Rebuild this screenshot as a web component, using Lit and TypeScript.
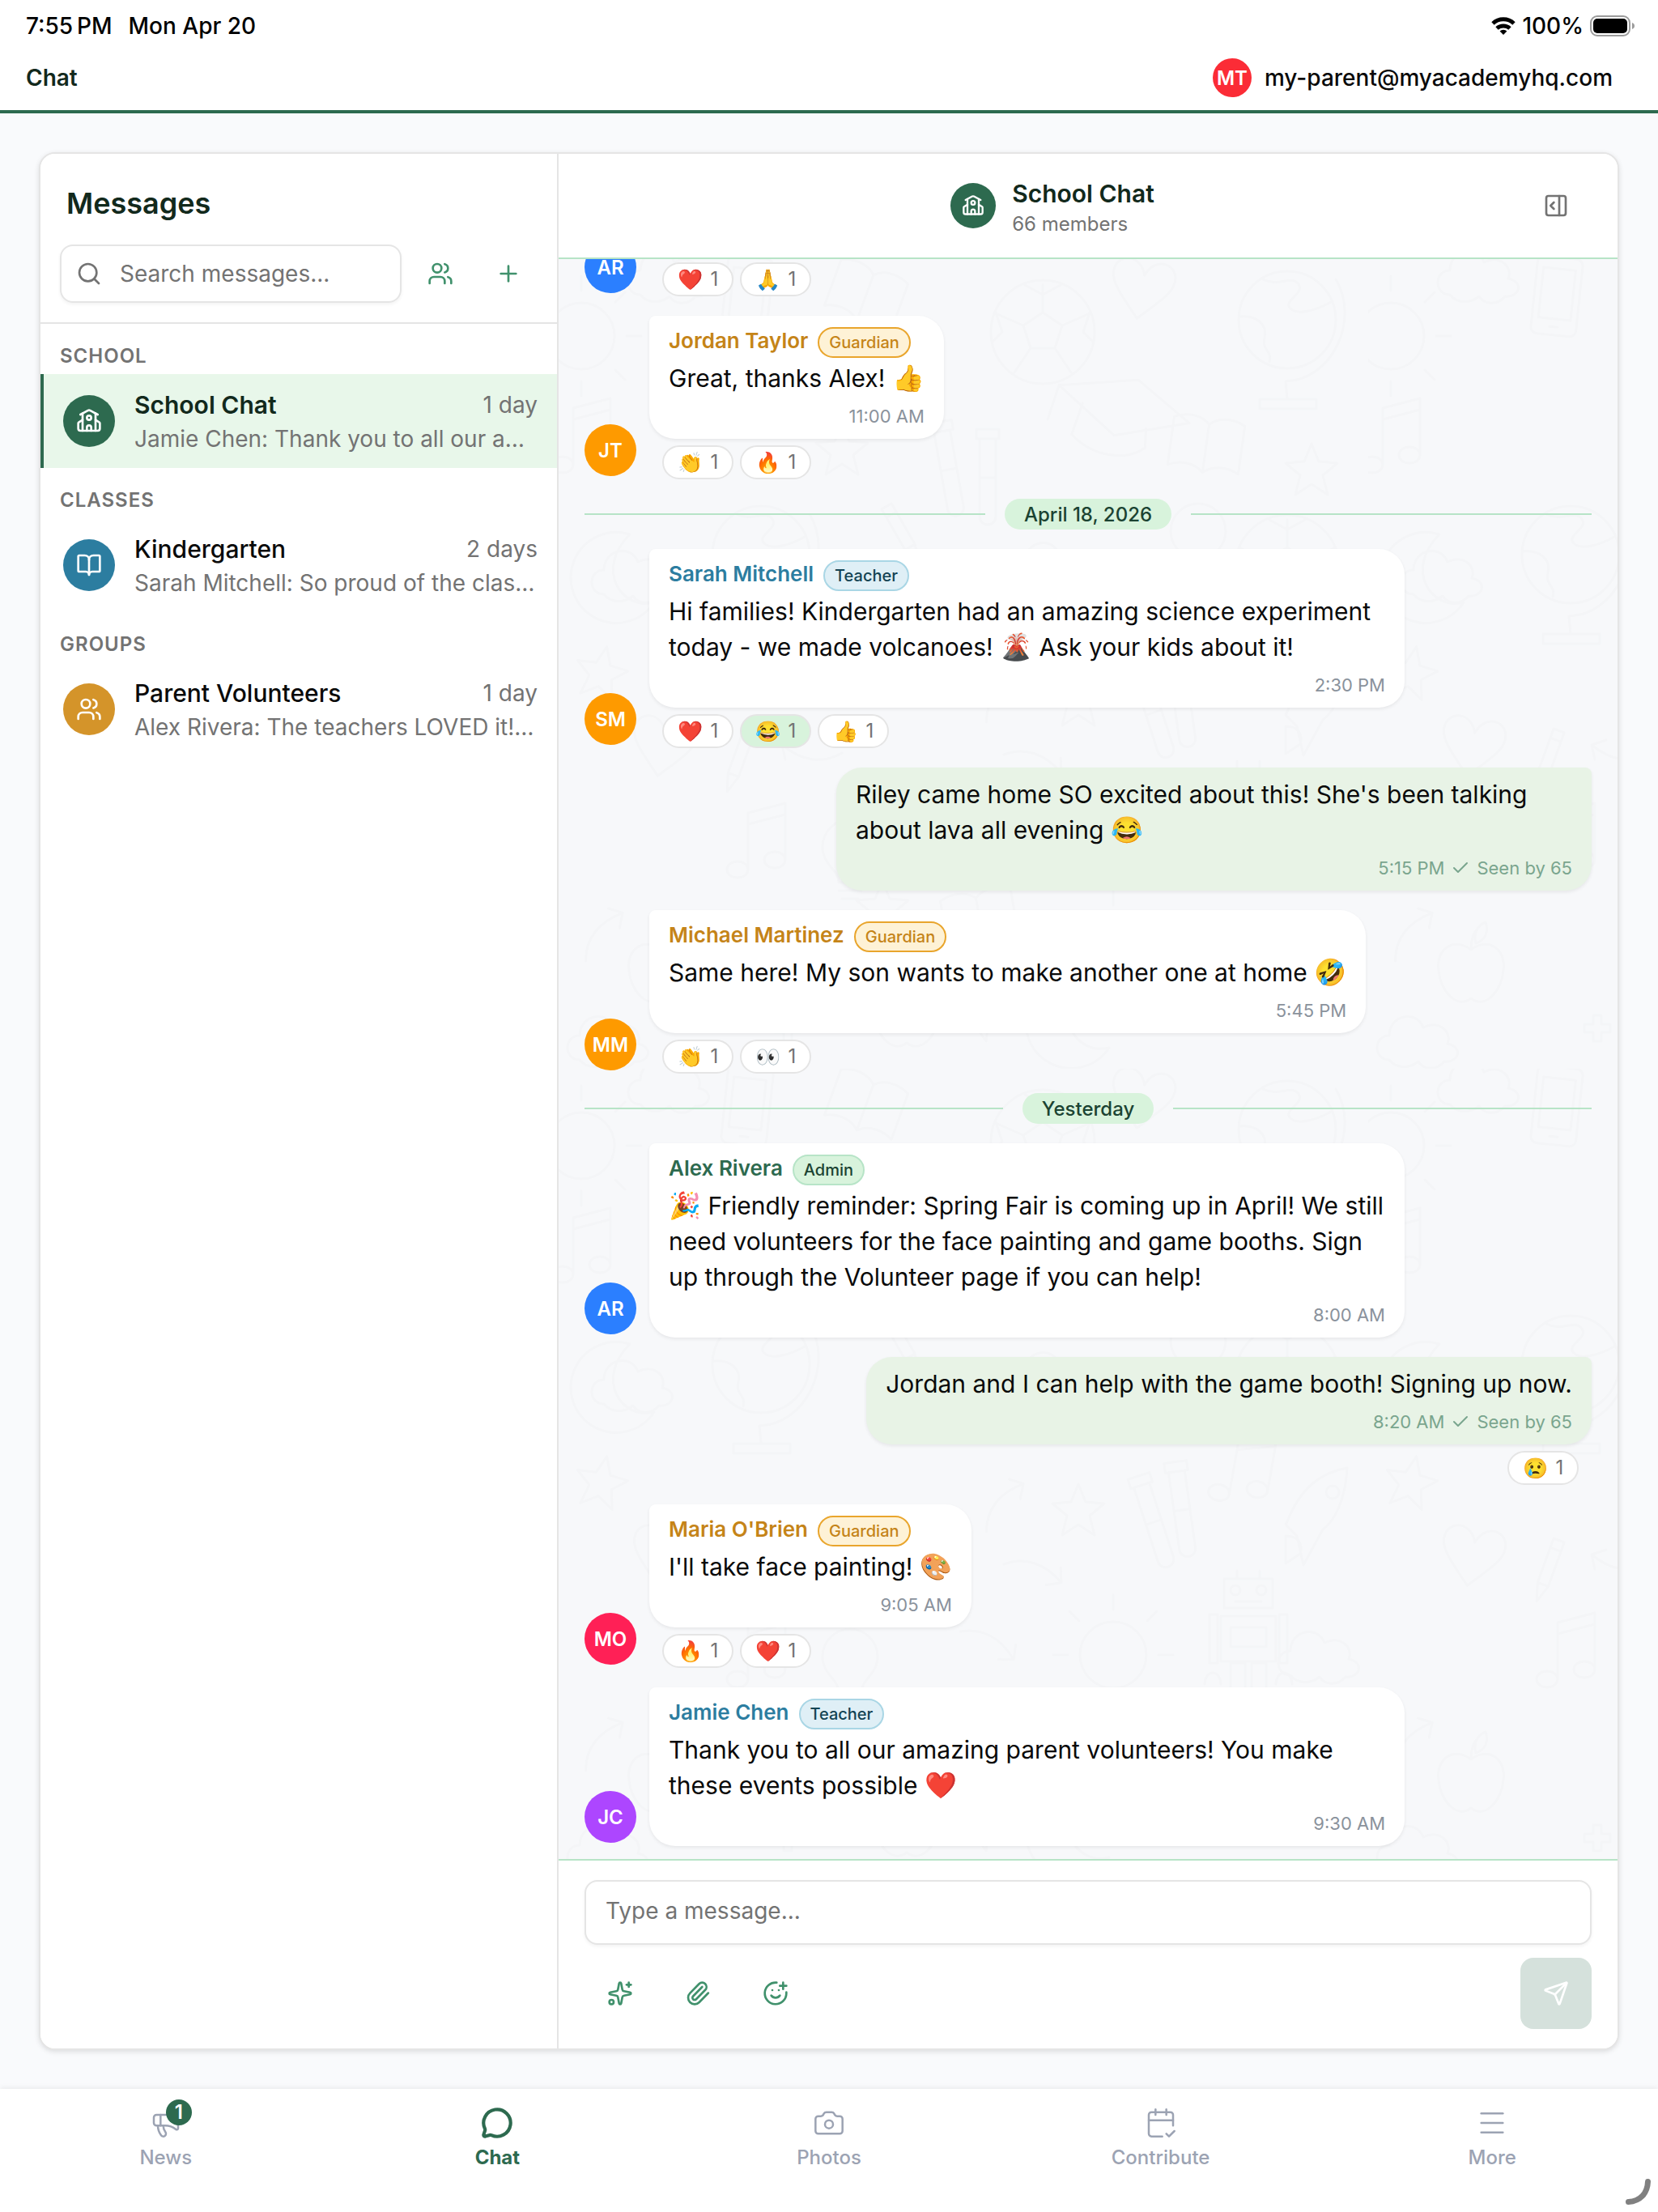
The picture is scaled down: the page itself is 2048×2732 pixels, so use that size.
import { LitElement, html, svg, css, nothing, type TemplateResult, type SVGTemplateResult } from "lit";
import { customElement, property } from "lit/decorators.js";
import { classMap } from "lit/directives/class-map.js";

const ICONS: Record<string, SVGTemplateResult> = {
  search: svg`<path d="m21 21-4.34-4.34"/><circle cx="11" cy="11" r="8"/>`,
  plus: svg`<path d="M5 12h14"/><path d="M12 5v14"/>`,
  users: svg`<path d="M16 21v-2a4 4 0 0 0-4-4H6a4 4 0 0 0-4 4v2"/><path d="M16 3.128a4 4 0 0 1 0 7.744"/><path d="M22 21v-2a4 4 0 0 0-3-3.87"/><circle cx="9" cy="7" r="4"/>`,
  school: svg`<path d="M14 21v-3a2 2 0 0 0-4 0v3"/><path d="M18 5v16"/><path d="m4 6 7.106-3.79a2 2 0 0 1 1.788 0L20 6"/><path d="m6 11-3.52 2.147a1 1 0 0 0-.48.854V19a2 2 0 0 0 2 2h16a2 2 0 0 0 2-2v-5a1 1 0 0 0-.48-.853L18 11"/><path d="M6 5v16"/><circle cx="12" cy="9" r="2"/>`,
  book: svg`<path d="M12 7v14"/><path d="M3 18a1 1 0 0 1-1-1V4a1 1 0 0 1 1-1h5a4 4 0 0 1 4 4 4 4 0 0 1 4-4h5a1 1 0 0 1 1 1v13a1 1 0 0 1-1 1h-6a3 3 0 0 0-3 3 3 3 0 0 0-3-3z"/>`,
  panel: svg`<rect x="3" y="3" width="18" height="18" rx="2"/><path d="M15 3v18"/><path d="m10 15-3-3 3-3"/>`,
  sparkles: svg`<path d="M11.017 2.814a1 1 0 0 1 1.966 0l1.051 5.558a2 2 0 0 0 1.594 1.594l5.558 1.051a1 1 0 0 1 0 1.966l-5.558 1.051a2 2 0 0 0-1.594 1.594l-1.051 5.558a1 1 0 0 1-1.966 0l-1.051-5.558a2 2 0 0 0-1.594-1.594l-5.558-1.051a1 1 0 0 1 0-1.966l5.558-1.051a2 2 0 0 0 1.594-1.594z"/><path d="M20 2v4"/><path d="M22 4h-4"/><circle cx="4" cy="20" r="2"/>`,
  clip: svg`<path d="m16 6-8.414 8.586a2 2 0 0 0 2.829 2.829l8.414-8.586a4 4 0 1 0-5.657-5.657l-8.379 8.551a6 6 0 1 0 8.485 8.485l8.379-8.551"/>`,
  smile: svg`<path d="M22 11v1a10 10 0 1 1-9-10"/><path d="M8 14s1.5 2 4 2 4-2 4-2"/><path d="M9 9h.01"/><path d="M15 9h.01"/><path d="M16 5h6"/><path d="M19 2v6"/>`,
  send: svg`<path d="M14.536 21.686a.5.5 0 0 0 .937-.024l6.5-19a.496.496 0 0 0-.635-.635l-19 6.5a.5.5 0 0 0-.024.937l7.93 3.18a2 2 0 0 1 1.112 1.11z"/><path d="m21.854 2.147-10.94 10.939"/>`,
  check: svg`<path d="M20 6 9 17l-5-5"/>`,
  megaphone: svg`<path d="M11 6a13 13 0 0 0 8.4-2.8A1 1 0 0 1 21 4v12a1 1 0 0 1-1.6.8A13 13 0 0 0 11 14H5a2 2 0 0 1-2-2V8a2 2 0 0 1 2-2z"/><path d="M6 14a12 12 0 0 0 2.4 7.2 2 2 0 0 0 3.2-2.4A8 8 0 0 1 10 14"/><path d="M8 6v8"/>`,
  chat: svg`<path d="M2.992 16.342a2 2 0 0 1 .094 1.167l-1.065 3.29a1 1 0 0 0 1.236 1.168l3.413-.998a2 2 0 0 1 1.099.092 10 10 0 1 0-4.777-4.719"/>`,
  camera: svg`<path d="M13.997 4a2 2 0 0 1 1.76 1.05l.486.9A2 2 0 0 0 18.003 7H20a2 2 0 0 1 2 2v9a2 2 0 0 1-2 2H4a2 2 0 0 1-2-2V9a2 2 0 0 1 2-2h1.997a2 2 0 0 0 1.759-1.048l.489-.904A2 2 0 0 1 10.004 4z"/><circle cx="12" cy="13" r="3"/>`,
  calendar: svg`<path d="M8 2v4"/><path d="M16 2v4"/><path d="M21 14V6a2 2 0 0 0-2-2H5a2 2 0 0 0-2 2v14a2 2 0 0 0 2 2h8"/><path d="M3 10h18"/><path d="m16 20 2 2 4-4"/>`,
  menu: svg`<path d="M4 5h16"/><path d="M4 12h16"/><path d="M4 19h16"/>`,
};

const icon = (name: string, size = 32, stroke = 2): TemplateResult => html`
  <svg width=${size} height=${size} viewBox="0 0 24 24" fill="none" stroke="currentColor"
    stroke-width=${stroke} stroke-linecap="round" stroke-linejoin="round" aria-hidden="true">${ICONS[name]}</svg>`;

const FONT = css`
  :host, button, input, textarea {
    font-family: Inter, "Liberation Sans", sans-serif;
  }
  *, *::before, *::after { box-sizing: border-box; }
  svg { display: block; flex: none; }
  button { border: 0; padding: 0; background: none; color: inherit; cursor: pointer; }
  h1, h2, h3, p, ul { margin: 0; padding: 0; font-weight: inherit; }
`;

/* ---------- status bar and page header ---------- */

@customElement("status-bar")
class StatusBar extends LitElement {
  static styles = [FONT, css`
    :host { display: flex; align-items: center; justify-content: space-between; height: 64px; padding: 0 28px 0 32px; background: #fff; color: #000; font-size: 28px; font-weight: 500; line-height: 36px; }
    .side { display: flex; align-items: center; gap: 20px; }
    .right { gap: 8px; }
  `];
  render() {
    return html`
      <div class="side"><span>7:55\u202fPM</span><span>Mon Apr 20</span></div>
      <div class="side right">
        <svg width="30" height="22" viewBox="0 0 30 22" fill="none" stroke="#000" stroke-width="5" aria-hidden="true">
          <path d="M2 8a19 19 0 0 1 26 0"/><path d="M7 14a12 12 0 0 1 16 0"/>
          <path d="M15 22l-4.400-4.600a6.500 6.500 0 0 1 8.800 0z" fill="#000" stroke="none"/>
        </svg>
        <span>100%</span>
        <svg width="56" height="26" viewBox="0 0 56 26" aria-hidden="true">
          <rect x="1" y="1" width="48" height="24" rx="8" fill="none" stroke="#9b9b9b" stroke-width="2"/>
          <rect x="4" y="4" width="42" height="18" rx="5" fill="#000"/>
          <path d="M52 9c2 .700 3 2.200 3 4s-1 3.300-3 4z" fill="#9b9b9b"/>
        </svg>
      </div>`;
  }
}

@customElement("page-header")
class PageHeader extends LitElement {
  static styles = [FONT, css`
    :host { display: flex; align-items: center; justify-content: space-between; height: 76px; padding: 0 56px 8px 32px; background: #fff; border-bottom: 4px solid #2d6a4f; font-size: 28px; line-height: 36px; }
    .title { font-weight: 600; color: #12291c; font-size: 28px; }
    .user { display: flex; align-items: center; gap: 16px; font-size: 28px; font-weight: 500; color: #0a0a0a; }
    .pic { display: grid; place-items: center; width: 48px; height: 48px; border-radius: 50%; background: #fb2c36; color: #fff; font-size: 24px; font-weight: 600; }
  `];
  render() {
    return html`
      <h1 class="title">Chat</h1>
      <button class="user" type="button"><span class="pic">MT</span><span>my-parent@myacademyhq.com</span></button>`;
  }
}

/* ---------- sidebar ---------- */

interface Room { label: string; icon: string; tone: string; name: string; age: string; preview: string; active?: boolean; }

const ROOMS: Room[] = [
  { label: "School", icon: "school", tone: "green", name: "School Chat", age: "1 day", preview: "Jamie Chen: Thank you to all our a…", active: true },
  { label: "Classes", icon: "book", tone: "blue", name: "Kindergarten", age: "2 days", preview: "Sarah Mitchell: So proud of the clas…" },
  { label: "Groups", icon: "users", tone: "gold", name: "Parent Volunteers", age: "1 day", preview: "Alex Rivera: The teachers LOVED it!…" },
];

@customElement("room-sidebar")
class RoomSidebar extends LitElement {
  static styles = [FONT, css`
    :host { display: flex; flex-direction: column; width: 640px; flex: none; background: #fff; border-right: 2px solid #e5e5e5; }
    .head { display: flex; flex-direction: column; gap: 27px; padding: 37px 24px 24px; border-bottom: 2px solid #e5e5e5; }
    .title { padding-left: 8px; font-size: 36px; line-height: 48px; font-weight: 600; color: #12291c; }
    .tools { display: flex; align-items: center; gap: 12px; }
    .field { flex: 1; min-width: 0; display: flex; align-items: center; gap: 22px; height: 72px; padding: 0 18px; border: 2px solid #e5e5e5; border-radius: 16px; color: #737373; box-shadow: 0 2px 4px rgba(0, 0, 0, .05); }
    .field input { flex: 1; min-width: 0; border: 0; outline: 0; padding: 0; background: none; font-size: 28px; line-height: 40px; color: #0a0a0a; }
    .field input::placeholder { color: #737373; opacity: 1; }
    .tool { display: grid; place-items: center; flex: none; width: 72px; height: 72px; color: #40916c; }
    .label { padding: 25px 24px 7px; font-size: 24px; line-height: 30px; font-weight: 600; letter-spacing: 1px; text-transform: uppercase; color: #737373; }
    .room { display: flex; align-items: center; gap: 24px; width: 100%; height: 116px; padding: 0 24px; border-left: 4px solid transparent; text-align: left; }
    .room.active { background: #e8f7ea; border-left-color: #2d6a4f; }
    .pic { display: grid; place-items: center; flex: none; width: 64px; height: 64px; border-radius: 50%; color: #fff; }
    .green { background: #2d6a4f; }
    .blue { background: #2c7da0; }
    .gold { background: #d4942a; }
    .body { flex: 1; min-width: 0; display: flex; flex-direction: column; padding-top: 2px; line-height: 42px; }
    .row { display: flex; justify-content: space-between; }
    .name { font-size: 30px; font-weight: 500; color: #0a0a0a; }
    .active .name { font-weight: 600; color: #12291c; }
    .age, .preview { font-size: 28px; color: #737373; }
    .preview { white-space: nowrap; overflow: hidden; text-overflow: ellipsis; }
  `];
  render() {
    return html`
      <div class="head">
        <h2 class="title">Messages</h2>
        <div class="tools">
          <label class="field">${icon("search")}<input type="search" aria-label="Search messages" placeholder="Search messages..." /></label>
          <div class="tools">
            <button class="tool" type="button" aria-label="New group">${icon("users")}</button>
            <button class="tool" type="button" aria-label="New message">${icon("plus")}</button>
          </div>
        </div>
      </div>
      ${ROOMS.map((r) => html`
        <section>
          <h3 class="label">${r.label}</h3>
          <button type="button" class=${classMap({ room: true, active: !!r.active })}>
            <span class="pic ${r.tone}">${icon(r.icon)}</span>
            <span class="body">
              <span class="row"><span class="name">${r.name}</span><span class="age">${r.age}</span></span>
              <span class="preview">${r.preview}</span>
            </span>
          </button>
        </section>`)}`;
  }
}

/* ---------- conversation ---------- */

type Role = "Guardian" | "Teacher" | "Admin";
interface Reaction { emoji: string; mine?: boolean; }
interface Message {
  kind: "message";
  initials?: string; tone?: string; name?: string; role?: Role;
  text?: string; time?: string; own?: boolean; seen?: number; reactions?: Reaction[];
}
interface Day { kind: "day"; label: string; }

const THREAD: (Message | Day)[] = [
  { kind: "message", initials: "AR", tone: "blue", reactions: [{ emoji: "❤️" }, { emoji: "🙏" }] },
  { kind: "message", initials: "JT", tone: "orange", name: "Jordan Taylor", role: "Guardian", text: "Great, thanks Alex! 👍", time: "11:00 AM", reactions: [{ emoji: "👏" }, { emoji: "🔥" }] },
  { kind: "day", label: "April 18, 2026" },
  { kind: "message", initials: "SM", tone: "orange", name: "Sarah Mitchell", role: "Teacher", text: "Hi families! Kindergarten had an amazing science experiment today - we made volcanoes! 🌋 Ask your kids about it!", time: "2:30 PM", reactions: [{ emoji: "❤️" }, { emoji: "😂", mine: true }, { emoji: "👍" }] },
  { kind: "message", own: true, text: "Riley came home SO excited about this! She's been talking about lava all evening 😂", time: "5:15 PM", seen: 65 },
  { kind: "message", initials: "MM", tone: "orange", name: "Michael Martinez", role: "Guardian", text: "Same here! My son wants to make another one at home 🤣", time: "5:45 PM", reactions: [{ emoji: "👏" }, { emoji: "👀" }] },
  { kind: "day", label: "Yesterday" },
  { kind: "message", initials: "AR", tone: "blue", name: "Alex Rivera", role: "Admin", text: "🎉 Friendly reminder: Spring Fair is coming up in April! We still need volunteers for the face painting and game booths. Sign up through the Volunteer page if you can help!", time: "8:00 AM" },
  { kind: "message", own: true, text: "Jordan and I can help with the game booth! Signing up now.", time: "8:20 AM", seen: 65, reactions: [{ emoji: "😢" }] },
  { kind: "message", initials: "MO", tone: "rose", name: "Maria O'Brien", role: "Guardian", text: "I'll take face painting! 🎨", time: "9:05 AM", reactions: [{ emoji: "🔥" }, { emoji: "❤️" }] },
  { kind: "message", initials: "JC", tone: "purple", name: "Jamie Chen", role: "Teacher", text: "Thank you to all our amazing parent volunteers! You make these events possible ❤️", time: "9:30 AM" },
];

/** Wraps every emoji of a message so that it can be drawn a little larger than the words. */
const withEmoji = (text: string) =>
  text.split(/(\p{Extended_Pictographic}\uFE0F?)/u).map((part, i) => (i % 2 ? html`<span class="emoji">${part}</span>` : part));

@customElement("chat-message")
class ChatMessage extends LitElement {
  @property({ attribute: false }) message!: Message;
  static styles = [FONT, css`
    :host { display: block; }
    .line { display: flex; align-items: flex-end; gap: 16px; }
    .own { justify-content: flex-end; }
    .pic { display: grid; place-items: center; flex: none; width: 64px; height: 64px; margin-bottom: 4px; border-radius: 50%; color: #fff; font-size: 24px; font-weight: 600; }
    .blue { background: #2b7fff; }
    .orange { background: #fe9a00; }
    .rose { background: #ff2056; }
    .purple { background: #ad46ff; }
    .stack { display: flex; flex-direction: column; align-items: flex-start; gap: 8px; max-width: 75%; }
    .own .stack { align-items: flex-end; }
    .bubble { padding: 11px 24px 12px; border-radius: 8px 32px 32px 32px; background: #fff; box-shadow: 0 2px 4px rgba(0, 0, 0, .07); }
    .own .bubble { border-radius: 32px 8px 32px 32px; background: #e8f3e6; }
    .who { display: flex; align-items: center; gap: 12px; height: 44px; padding-bottom: 2px; font-size: 26px; line-height: 36px; font-weight: 600; }
    .person { padding-bottom: 2px; }
    .who.Guardian { color: #c58418; }
    .who.Teacher { color: #2c7da0; }
    .who.Admin { color: #2d6a4f; }
    .role { height: 38px; margin-top: 2px; padding: 0 12px; border: 2px solid; border-radius: 19px; font-size: 20px; line-height: 34px; font-weight: 500; }
    .Guardian .role { color: #c58418; background: #fef2d6; border-color: #e9a52c; }
    .Teacher .role { color: #134353; background: #dfeff6; border-color: #a9d6e5; }
    .Admin .role { color: #1b4332; background: #d8f3dc; border-color: #b7e4c7; }
    .text { font-size: 30px; line-height: 44px; color: #0a0a0a; }
    .emoji { font-size: 32px; line-height: 32px; }
    .meta { display: flex; align-items: center; justify-content: flex-end; gap: 8px; margin-top: 9px; font-size: 22px; line-height: 32px; color: #8a929c; }
    .own .meta { color: #7aa58e; }
    .reactions { display: flex; gap: 8px; padding: 0 16px; }
    .reaction { display: flex; align-items: center; justify-content: center; gap: 10px; width: 88px; height: 42px; border: 2px solid #e5e5e5; border-radius: 21px; background: #fff; font-size: 24px; line-height: 32px; color: #737373; }
    .reaction.mine { background: #d8f3dc; }
    .face { font-size: 25px; }
  `];
  render() {
    const m = this.message;
    return html`
      <div class=${classMap({ line: true, own: !!m.own })}>
        ${m.initials ? html`<span class="pic ${m.tone}">${m.initials}</span>` : nothing}
        <div class="stack">
          ${m.text ? html`
            <div class="bubble">
              ${m.name ? html`<div class="who ${m.role}"><span class="person">${m.name}</span><span class="role">${m.role}</span></div>` : nothing}
              <p class="text">${withEmoji(m.text)}</p>
              <div class="meta"><span>${m.time}</span>${m.seen ? html`${icon("check", 24)}<span>Seen by ${m.seen}</span>` : nothing}</div>
            </div>` : nothing}
          ${m.reactions ? html`
            <div class="reactions">
              ${m.reactions.map((r) => html`<button type="button" class=${classMap({ reaction: true, mine: !!r.mine })}><span class="face">${r.emoji}</span><span>1</span></button>`)}
            </div>` : nothing}
        </div>
      </div>`;
  }
}

const STAR = "M0-32 9-10 32-8 14 7 20 31 0 18-20 31-14 7-32-8-9-10z";
const HEART = "M0 44C-22 20-42 4-38-14c4-18 30-20 38 4 8-24 34-22 38-4 4 18-16 34-38 58z";
const CLOUD = "M-44 24c-20 0-20-30 0-30 0-26 34-32 42-10 20-10 36 6 30 20 20 4 14 24-4 22-10 12-26 10-32 0-12 10-28 8-36-2z";
const NOTES = "M-16 34v-70l46-12v70M-16-22l46-12M-16 34a13 10 0 1 1-26 0 13 10 0 1 1 26 0zM30 22a13 10 0 1 1-26 0 13 10 0 1 1 26 0z";
const PENCIL = "M-7-40h14v58L0 40l-7-22zM-7-28H7M-7 18H7";
const TUBE = "M-14-60h28v12h-28zM-10-48v96a10 10 0 0 0 20 0v-96M-10 0h20";
const PHONE = "M-20-48h40a8 8 0 0 1 8 8v80a8 8 0 0 1-8 8h-40a8 8 0 0 1-8-8v-80a8 8 0 0 1 8-8zM-20-34h40v62h-40zM-5 38h10";
const ARROW = "M-40 4c24-14 50-10 74 10M34 14l-4-18M34 14l-18 6";
const SUN = "M41 0a41 41 0 1 1-82 0 41 41 0 1 1 82 0zM0-56v-18M0 56v18M-56 0h-18M56 0h18M42-42l12-12M-42 42l-12 12M42 42l12 12M-42-42l-12-12";
const BALL = "M64 0a64 64 0 1 1-128 0 64 64 0 1 1 128 0zM0-24l24 16-9 28h-30l-9-28zM0-24v-34M24-8l32-14M15 20l20 30M-15 20l-20 30M-24-8l-32-14M-22-58l22 12 22-12M58-24l-8 24 12 12M-58-24l8 24-12 12";
const GLOBE = "M60 0a60 60 0 1 1-120 0 60 60 0 1 1 120 0zM-30-50c20 10 36-6 44 6s-20 20-10 30 36 0 50-8M-58-4c20-2 34 10 30 26s10 16 6 30M60-50c30 50-4 124-62 126l2 22M-34 98l70 0v12h-70z";
const CAP = "M-76-24 20-44 90 0 0 28zM-44-6l-8 40c30 24 70 24 92 4l-2-24M-76-24l-8 44";
const APPLE = "M0-22c-20-16-44-2-40 26 2 24 22 48 40 34 18 14 38-10 40-34 4-28-20-42-40-26zM0-22c0-10 2-20 8-26M6-30c-4-16 6-24 12-26 4 12 0 22-12 26z";
const BOOK = "M-44-30c16-8 34-6 44 4 10-10 28-12 44-4v60c-16-8-34-6-44 4-10-10-28-12-44-4zM0-26v60";
const MOON = "M30-50a56 56 0 1 0 30 84c-40 10-74-40-30-84z";
const BULB = "M-14 30c0-16-20-22-20-44a34 34 0 0 1 68 0c0 22-20 28-20 44zM-14 40h28M-10 50h20";
const ROCKET = "M-50 4c16-40 40-60 74-66-2 40-16 66-30 76l-24 44-8-36-14-14zM14-32a8 8 0 1 1-16 0 8 8 0 1 1 16 0zM-52 22c14 0 22 8 18 22l-18 12z";
const ROBOT = "M-30-70h60v36h-60zM-14-70v-10M14-70v-10M-10-56a6 6 0 1 1-12 0 6 6 0 1 1 12 0zM22-56a6 6 0 1 1-12 0 6 6 0 1 1 12 0zM-16-42h32M-34-24h68v56h-68zM-22-10h44v24h-44zM-48-26h10v60h-10zM38-26h10v60H38zM-54 60a10 14 0 1 1 20 0M34 60a10 14 0 1 1 20 0M-22 34h18v44h-18zM4 34h18v44H4z";
const CROSS = "M-5-16h10v11h11v10H5v11H-5V5h-11V-5h11z";

const DOODLES: [string, number, number, number][] = [
  [SUN, 28, 95, 0], [PHONE, 233, 46, 6], [CLOUD, 145, 20, 0], [BOOK, 380, 44, 20], [BALL, 598, 90, 0], [HEART, 722, 30, 10],
  [CAP, 690, 190, 8], [TUBE, 482, 260, -10], [TUBE, 530, 270, 0], [STAR, 350, 235, 0], [NOTES, 34, 220, 0], [MOON, 58, 390, 0],
  [CLOUD, 100, 390, 0], [GLOBE, 250, 365, 0], [PENCIL, 425, 340, -30], [STAR, 53, 510, 12], [HEART, 130, 595, 10], [PENCIL, 222, 620, 20],
  [ARROW, 310, 614, 180], [ARROW, 590, 615, 10], [ARROW, 535, 705, 20], [ARROW, 545, 535, -60], [NOTES, 250, 720, 0], [STAR, 642, 545, 0],
  [TUBE, 735, 560, -18], [TUBE, 770, 545, -8], [NOTES, 850, 495, 10], [ROCKET, 950, 555, 0], [ROBOT, 852, 700, 0], [CLOUD, 948, 725, 0],
  [SUN, 685, 724, 0], [BULB, 360, 740, 0], [ARROW, 50, 830, -60], [STAR, 400, 800, 0], [BOOK, 520, 815, -10], [APPLE, 127, 875, 0],
  [CROSS, 283, 950, 0], [CLOUD, 70, 965, 0], [STAR, 520, 930, 20], [APPLE, 430, 930, 0], [PENCIL, 700, 900, 15], [HEART, 800, 880, 0],
  [GLOBE, 900, 75, 0], [BOOK, 800, 230, 8], [STAR, 930, 260, 0], [BULB, 790, 350, 0], [BALL, 900, 380, 0], [CLOUD, 620, 380, 0],
  [PHONE, 910, 900, -12], [MOON, 620, 940, 0],
];

@customElement("chat-panel")
class ChatPanel extends LitElement {
  static styles = [FONT, css`
    :host { display: flex; flex-direction: column; flex: 1; min-width: 0; min-height: 0; background: #fff; }
    .head { display: flex; align-items: center; height: 130px; flex: none; padding: 0 32px; border-bottom: 2px solid #b7e4c7; }
    .room { flex: 1; display: flex; align-items: center; justify-content: center; gap: 20px; }
    .pic { display: grid; place-items: center; width: 56px; height: 56px; border-radius: 50%; background: #2d6a4f; color: #fff; }
    .who { padding-top: 6px; }
    .name { font-size: 30px; line-height: 40px; font-weight: 600; color: #12291c; }
    .count { font-size: 24px; line-height: 36px; color: #737373; }
    .tool { display: grid; place-items: center; width: 88px; height: 88px; color: #40916c; }
    .head .tool { color: #737373; }
    .thread { position: relative; flex: 1; min-height: 0; overflow: hidden; background: #f7f8fa; display: flex; flex-direction: column; justify-content: flex-end; gap: 24px; padding: 0 32px 16px; }
    .doodles { position: absolute; inset: 0; width: 100%; height: 100%; }
    .thread > chat-message, .thread > .day { position: relative; }
    .day { display: flex; align-items: center; gap: 24px; }
    .day::before, .day::after { content: ""; flex: 1; height: 2px; background: #b7e4c7; }
    .pill { height: 38px; padding: 0 24px; border-radius: 19px; background: #d8f3dc; color: #1b4332; font-size: 24px; line-height: 40px; font-weight: 500; }
    .composer { display: flex; flex-direction: column; gap: 16px; flex: none; padding: 24px 32px; border-top: 2px solid #b7e4c7; }
    .input { display: block; width: 100%; height: 80px; padding: 16px 24px; border: 2px solid #e5e5e5; border-radius: 16px; resize: none; outline: 0; font-size: 28px; line-height: 40px; color: #0a0a0a; box-shadow: 0 2px 4px rgba(0, 0, 0, .05); }
    .input::placeholder { color: #737373; opacity: 1; }
    .actions { display: flex; gap: 8px; }
    .send { display: grid; place-items: center; width: 88px; height: 88px; margin-left: auto; border-radius: 16px; background: #d5e1dc; color: #fff; }
  `];
  render() {
    return html`
      <header class="head">
        <div class="room">
          <span class="pic">${icon("school", 28)}</span>
          <div class="who"><h2 class="name">School Chat</h2><p class="count">66 members</p></div>
        </div>
        <button class="tool" type="button" aria-label="Open details">${icon("panel")}</button>
      </header>
      <div class="thread">
        <svg class="doodles" aria-hidden="true">
          <defs>
            <pattern id="doodle" width="1000" height="1000" patternUnits="userSpaceOnUse">
              <g fill="none" stroke="#f4f5f7" stroke-width="3" stroke-linejoin="round" stroke-linecap="round">
                ${DOODLES.map(([d, x, y, r]) => svg`<path d=${d} transform="translate(${x} ${y}) rotate(${r})"/>`)}
              </g>
            </pattern>
          </defs>
          <rect width="100%" height="100%" fill="url(#doodle)"/>
        </svg>
        ${THREAD.map((t) => t.kind === "day"
          ? html`<div class="day"><span class="pill">${t.label}</span></div>`
          : html`<chat-message .message=${t}></chat-message>`)}
      </div>
      <div class="composer">
        <textarea class="input" rows="1" aria-label="Message" placeholder="Type a message..."></textarea>
        <div class="actions">
          <button class="tool" type="button" aria-label="Assist">${icon("sparkles")}</button>
          <button class="tool" type="button" aria-label="Attach file">${icon("clip")}</button>
          <button class="tool" type="button" aria-label="Add emoji">${icon("smile")}</button>
          <button class="send" type="button" aria-label="Send">${icon("send")}</button>
        </div>
      </div>`;
  }
}

/* ---------- bottom navigation ---------- */

const TABS = [
  { label: "News", icon: "megaphone", badge: 1 },
  { label: "Chat", icon: "chat", active: true },
  { label: "Photos", icon: "camera" },
  { label: "Contribute", icon: "calendar" },
  { label: "More", icon: "menu" },
];

@customElement("tab-bar")
class TabBar extends LitElement {
  static styles = [FONT, css`
    :host { position: relative; display: block; height: 152px; flex: none; background: #fff; box-shadow: 0 -2px 6px rgba(0, 0, 0, .06); }
    .tabs { display: grid; grid-template-columns: repeat(5, 1fr); }
    .tab { display: flex; flex-direction: column; align-items: center; gap: 7px; padding-top: 22px; color: #9ca3b3; font-size: 24px; line-height: 32px; font-weight: 500; text-decoration: none; }
    .tab.active { color: #2d6a4f; font-weight: 700; }
    .glyph { position: relative; }
    .badge { position: absolute; top: -9px; right: -12px; display: grid; place-items: center; width: 32px; height: 32px; border-radius: 50%; background: #2d6a4f; color: #fff; font-size: 24px; line-height: 32px; font-weight: 600; }
    .corner { position: absolute; right: 5px; bottom: 5px; }
  `];
  render() {
    return html`
      <nav class="tabs">
        ${TABS.map((t) => html`
          <a href="#${t.label.toLowerCase()}" class=${classMap({ tab: true, active: !!t.active })}>
            <span class="glyph">${icon(t.icon, 40, t.active ? 2.5 : 1.5)}${t.badge ? html`<span class="badge">${t.badge}</span>` : nothing}</span>
            <span>${t.label}</span>
          </a>`)}
      </nav>
      <svg class="corner" width="36" height="40" viewBox="0 0 36 40" fill="none" stroke="#808080" stroke-width="7" stroke-linecap="round" aria-hidden="true"><path d="M28.500 7.500C28 22 19 31.500 4.500 32.500"/></svg>`;
  }
}

@customElement("app-root")
class AppRoot extends LitElement {
  static styles = [FONT, css`
    :host { display: flex; flex-direction: column; height: 100vh; background: #f9fafc; }
    .main { flex: 1; min-height: 0; display: flex; padding: 48px; }
    .card { flex: 1; min-width: 0; display: flex; border: 2px solid #e5e5e5; border-radius: 20px; overflow: hidden; background: #fff; box-shadow: 0 2px 6px rgba(0, 0, 0, .12); }
  `];
  render() {
    return html`
      <status-bar></status-bar>
      <page-header></page-header>
      <main class="main"><div class="card"><room-sidebar></room-sidebar><chat-panel></chat-panel></div></main>
      <tab-bar></tab-bar>`;
  }
}
